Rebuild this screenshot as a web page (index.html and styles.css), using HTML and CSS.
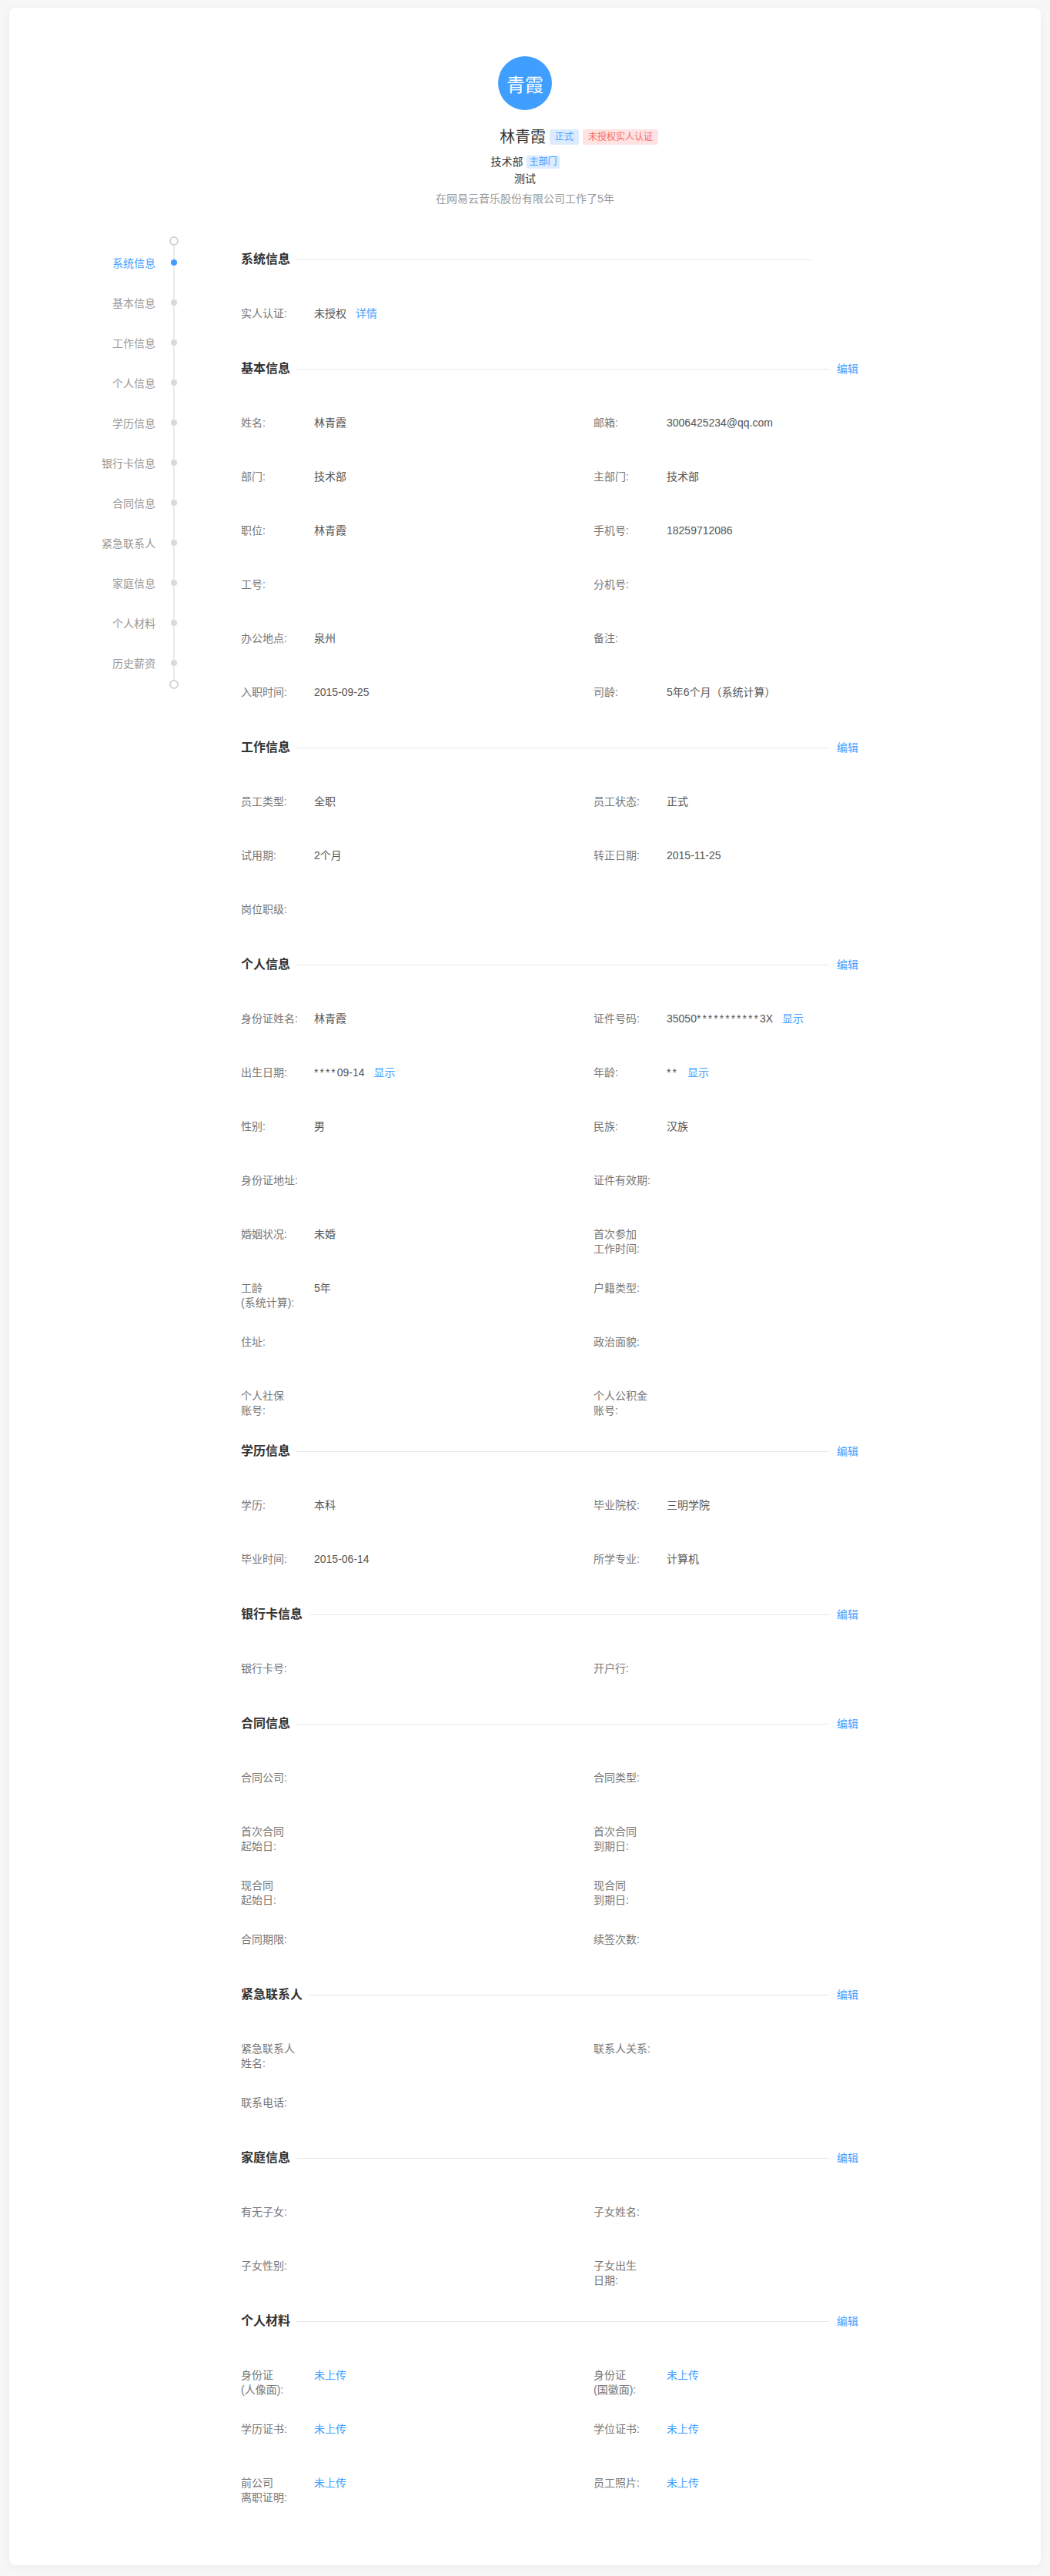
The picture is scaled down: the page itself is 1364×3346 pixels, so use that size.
FILE: index.html
```html
<!DOCTYPE html>
<html lang="zh-CN">
<head>
<meta charset="utf-8">
<title>员工档案 - 林青霞</title>
<link rel="stylesheet" href="styles.css">
</head>
<body>
<div class="page">
  <div class="card">
    <header class="profile">
      <div class="avatar">青霞</div>
      <div class="name-row">
        <span></span>
        <h1 class="name">林青霞</h1>
        <div class="tags">
          <span class="tag tag-blue">正式</span>
          <span class="tag tag-red">未授权实人认证</span>
        </div>
      </div>
      <div class="dept">技术部<span class="tag tag-blue tag-sm">主部门</span></div>
      <div class="role">测试</div>
      <div class="tenure">在网易云音乐股份有限公司工作了5年</div>
    </header>

    <div class="body">
      <nav class="timeline">
        <div class="tl-cap"><span class="ring"></span></div>
        <a class="tl-item active">系统信息<span class="tl-dot"></span></a>
        <a class="tl-item">基本信息<span class="tl-dot"></span></a>
        <a class="tl-item">工作信息<span class="tl-dot"></span></a>
        <a class="tl-item">个人信息<span class="tl-dot"></span></a>
        <a class="tl-item">学历信息<span class="tl-dot"></span></a>
        <a class="tl-item">银行卡信息<span class="tl-dot"></span></a>
        <a class="tl-item">合同信息<span class="tl-dot"></span></a>
        <a class="tl-item">紧急联系人<span class="tl-dot"></span></a>
        <a class="tl-item">家庭信息<span class="tl-dot"></span></a>
        <a class="tl-item">个人材料<span class="tl-dot"></span></a>
        <a class="tl-item">历史薪资<span class="tl-dot"></span></a>
        <div class="tl-cap"><span class="ring"></span></div>
      </nav>

      <main class="content">
        <section class="section">
          <div class="sec-head"><h2 class="sec-title">系统信息</h2><span class="sec-line short"></span></div>
          <div class="fields">
            <div class="field"><span class="label">实人认证:</span><span class="value">未授权<span class="link">详情</span></span></div>
          </div>
        </section>

        <section class="section">
          <div class="sec-head"><h2 class="sec-title">基本信息</h2><span class="sec-line"></span><span class="sec-edit">编辑</span></div>
          <div class="fields">
            <div class="field"><span class="label">姓名:</span><span class="value">林青霞</span></div>
            <div class="field"><span class="label">邮箱:</span><span class="value">3006425234@qq.com</span></div>
            <div class="field"><span class="label">部门:</span><span class="value">技术部</span></div>
            <div class="field"><span class="label">主部门:</span><span class="value">技术部</span></div>
            <div class="field"><span class="label">职位:</span><span class="value">林青霞</span></div>
            <div class="field"><span class="label">手机号:</span><span class="value">18259712086</span></div>
            <div class="field"><span class="label">工号:</span><span class="value"></span></div>
            <div class="field"><span class="label">分机号:</span><span class="value"></span></div>
            <div class="field"><span class="label">办公地点:</span><span class="value">泉州</span></div>
            <div class="field"><span class="label">备注:</span><span class="value"></span></div>
            <div class="field"><span class="label">入职时间:</span><span class="value">2015-09-25</span></div>
            <div class="field"><span class="label">司龄:</span><span class="value">5年6个月（系统计算）</span></div>
          </div>
        </section>

        <section class="section">
          <div class="sec-head"><h2 class="sec-title">工作信息</h2><span class="sec-line"></span><span class="sec-edit">编辑</span></div>
          <div class="fields">
            <div class="field"><span class="label">员工类型:</span><span class="value">全职</span></div>
            <div class="field"><span class="label">员工状态:</span><span class="value">正式</span></div>
            <div class="field"><span class="label">试用期:</span><span class="value">2个月</span></div>
            <div class="field"><span class="label">转正日期:</span><span class="value">2015-11-25</span></div>
            <div class="field"><span class="label">岗位职级:</span><span class="value"></span></div>
          </div>
        </section>

        <section class="section">
          <div class="sec-head"><h2 class="sec-title">个人信息</h2><span class="sec-line"></span><span class="sec-edit">编辑</span></div>
          <div class="fields">
            <div class="field"><span class="label">身份证姓名:</span><span class="value">林青霞</span></div>
            <div class="field"><span class="label">证件号码:</span><span class="value">35050<span class="mask">&#42;&#42;&#42;&#42;&#42;&#42;&#42;&#42;&#42;&#42;&#42;</span>3X<span class="link">显示</span></span></div>
            <div class="field"><span class="label">出生日期:</span><span class="value"><span class="mask">&#42;&#42;&#42;&#42;</span>09-14<span class="link">显示</span></span></div>
            <div class="field"><span class="label">年龄:</span><span class="value"><span class="mask">&#42;&#42;</span><span class="link">显示</span></span></div>
            <div class="field"><span class="label">性别:</span><span class="value">男</span></div>
            <div class="field"><span class="label">民族:</span><span class="value">汉族</span></div>
            <div class="field"><span class="label">身份证地址:</span><span class="value"></span></div>
            <div class="field"><span class="label">证件有效期:</span><span class="value"></span></div>
            <div class="field"><span class="label">婚姻状况:</span><span class="value">未婚</span></div>
            <div class="field"><span class="label">首次参加<br>工作时间:</span><span class="value"></span></div>
            <div class="field"><span class="label">工龄<br>(系统计算):</span><span class="value">5年</span></div>
            <div class="field"><span class="label">户籍类型:</span><span class="value"></span></div>
            <div class="field"><span class="label">住址:</span><span class="value"></span></div>
            <div class="field"><span class="label">政治面貌:</span><span class="value"></span></div>
            <div class="field"><span class="label">个人社保<br>账号:</span><span class="value"></span></div>
            <div class="field"><span class="label">个人公积金<br>账号:</span><span class="value"></span></div>
          </div>
        </section>

        <section class="section">
          <div class="sec-head"><h2 class="sec-title">学历信息</h2><span class="sec-line"></span><span class="sec-edit">编辑</span></div>
          <div class="fields">
            <div class="field"><span class="label">学历:</span><span class="value">本科</span></div>
            <div class="field"><span class="label">毕业院校:</span><span class="value">三明学院</span></div>
            <div class="field"><span class="label">毕业时间:</span><span class="value">2015-06-14</span></div>
            <div class="field"><span class="label">所学专业:</span><span class="value">计算机</span></div>
          </div>
        </section>

        <section class="section">
          <div class="sec-head"><h2 class="sec-title">银行卡信息</h2><span class="sec-line"></span><span class="sec-edit">编辑</span></div>
          <div class="fields">
            <div class="field"><span class="label">银行卡号:</span><span class="value"></span></div>
            <div class="field"><span class="label">开户行:</span><span class="value"></span></div>
          </div>
        </section>

        <section class="section">
          <div class="sec-head"><h2 class="sec-title">合同信息</h2><span class="sec-line"></span><span class="sec-edit">编辑</span></div>
          <div class="fields">
            <div class="field"><span class="label">合同公司:</span><span class="value"></span></div>
            <div class="field"><span class="label">合同类型:</span><span class="value"></span></div>
            <div class="field"><span class="label">首次合同<br>起始日:</span><span class="value"></span></div>
            <div class="field"><span class="label">首次合同<br>到期日:</span><span class="value"></span></div>
            <div class="field"><span class="label">现合同<br>起始日:</span><span class="value"></span></div>
            <div class="field"><span class="label">现合同<br>到期日:</span><span class="value"></span></div>
            <div class="field"><span class="label">合同期限:</span><span class="value"></span></div>
            <div class="field"><span class="label">续签次数:</span><span class="value"></span></div>
          </div>
        </section>

        <section class="section">
          <div class="sec-head"><h2 class="sec-title">紧急联系人</h2><span class="sec-line"></span><span class="sec-edit">编辑</span></div>
          <div class="fields">
            <div class="field"><span class="label">紧急联系人<br>姓名:</span><span class="value"></span></div>
            <div class="field"><span class="label">联系人关系:</span><span class="value"></span></div>
            <div class="field"><span class="label">联系电话:</span><span class="value"></span></div>
          </div>
        </section>

        <section class="section">
          <div class="sec-head"><h2 class="sec-title">家庭信息</h2><span class="sec-line"></span><span class="sec-edit">编辑</span></div>
          <div class="fields">
            <div class="field"><span class="label">有无子女:</span><span class="value"></span></div>
            <div class="field"><span class="label">子女姓名:</span><span class="value"></span></div>
            <div class="field"><span class="label">子女性别:</span><span class="value"></span></div>
            <div class="field"><span class="label">子女出生<br>日期:</span><span class="value"></span></div>
          </div>
        </section>

        <section class="section">
          <div class="sec-head"><h2 class="sec-title">个人材料</h2><span class="sec-line"></span><span class="sec-edit">编辑</span></div>
          <div class="fields">
            <div class="field"><span class="label">身份证<br>(人像面):</span><span class="value upload">未上传</span></div>
            <div class="field"><span class="label">身份证<br>(国徽面):</span><span class="value upload">未上传</span></div>
            <div class="field"><span class="label">学历证书:</span><span class="value upload">未上传</span></div>
            <div class="field"><span class="label">学位证书:</span><span class="value upload">未上传</span></div>
            <div class="field"><span class="label">前公司<br>离职证明:</span><span class="value upload">未上传</span></div>
            <div class="field"><span class="label">员工照片:</span><span class="value upload">未上传</span></div>
          </div>
        </section>
      </main>
    </div>
  </div>
</div>
</body>
</html>
```

FILE: styles.css
```css
* {
  box-sizing: border-box;
}

body {
  margin: 0;
  background: #f7f7f8;
  font-family: "Liberation Sans", "Noto Sans CJK SC", sans-serif;
  color: #333;
}

.page {
  padding: 10px 12px 14px;
}

.card {
  background: #fff;
  border-radius: 8px;
  box-shadow: 0 2px 12px rgba(0, 0, 0, 0.05);
  padding: 63px 0 46px;
}

/* ---------- profile header ---------- */
.profile {
  display: flex;
  flex-direction: column;
  align-items: center;
}

.avatar {
  width: 70px;
  height: 70px;
  border-radius: 50%;
  background: #409eff;
  color: #fff;
  font-size: 24px;
  display: flex;
  align-items: center;
  justify-content: center;
}

.name-row {
  width: 100%;
  margin-top: 25px;
  padding-right: 6px;
  height: 20px;
  display: grid;
  grid-template-columns: 1fr auto 1fr;
  align-items: center;
}

.name {
  margin: 0;
  font-size: 20px;
  line-height: 20px;
  font-weight: normal;
  color: #333;
}

.tags {
  display: flex;
  gap: 5px;
  margin-left: 5px;
}

.tag {
  font-size: 12px;
  line-height: 20px;
  padding: 0 7px;
  border-radius: 3px;
  white-space: nowrap;
}

.tag-blue {
  background: #dcebff;
  color: #409eff;
}

.tag-red {
  background: #ffe2e2;
  color: #f56c6c;
}

.dept {
  margin-top: 11px;
  font-size: 14px;
  line-height: 22px;
  display: flex;
  align-items: center;
  gap: 5px;
  color: #333;
}

.tag-sm {
  line-height: 17px;
  padding: 0 3px;
}

.role {
  font-size: 14px;
  line-height: 22px;
  color: #333;
}

.tenure {
  margin-top: 4px;
  font-size: 14px;
  line-height: 22px;
  color: #999;
}

/* ---------- body ---------- */
.body {
  display: flex;
  align-items: flex-start;
}

.timeline {
  width: 224px;
  flex-shrink: 0;
  margin-top: 42px;
  display: flex;
  flex-direction: column;
  background: linear-gradient(#ebebee, #ebebee) no-repeat 213px 2px / 2px calc(100% - 4px);
}

.tl-cap {
  height: 4px;
  display: flex;
  align-items: center;
  justify-content: flex-end;
}

.ring {
  width: 12px;
  height: 12px;
  border: 2px solid #d4d4d8;
  border-radius: 50%;
  background: #fff;
  margin-right: 4px;
  flex-shrink: 0;
}

.tl-item {
  height: 52px;
  display: flex;
  align-items: center;
  justify-content: flex-end;
  font-size: 14px;
  color: #999;
  cursor: pointer;
}

.tl-dot {
  width: 8px;
  height: 8px;
  border-radius: 50%;
  background: #d9d9de;
  margin: 0 6px 0 20px;
}

.tl-item.active {
  color: #409eff;
}

.tl-item.active .tl-dot {
  background: #409eff;
}

/* ---------- content ---------- */
.content {
  width: 802px;
  margin-left: 77px;
  margin-top: 58px;
}

.section + .section {
  margin-top: 1px;
}

.sec-head {
  height: 20px;
  display: flex;
  align-items: center;
}

.sec-title {
  margin: 0;
  font-size: 16px;
  line-height: 20px;
  font-weight: bold;
  color: #333;
}

.sec-line {
  flex: 1;
  height: 1px;
  background: #e8e8e8;
  margin: 0 10px 0 8px;
}

.sec-line.short {
  margin-right: 60px;
}

.sec-edit {
  font-size: 14px;
  line-height: 20px;
  color: #409eff;
  cursor: pointer;
}

.fields {
  margin-top: 51px;
  display: grid;
  grid-template-columns: 458px 1fr;
  grid-auto-rows: 70px;
}

.field {
  display: flex;
  align-items: flex-start;
  font-size: 14px;
  line-height: 19px;
  color: #555;
}

.field .label {
  width: 95px;
  flex-shrink: 0;
  color: #777;
}

.field .value {
  color: #555;
  white-space: nowrap;
}

.field .mask {
  letter-spacing: 2px;
  color: #555;
}

.field .link {
  color: #409eff;
  margin-left: 12px;
  cursor: pointer;
}

.field .upload {
  color: #409eff;
}
```
